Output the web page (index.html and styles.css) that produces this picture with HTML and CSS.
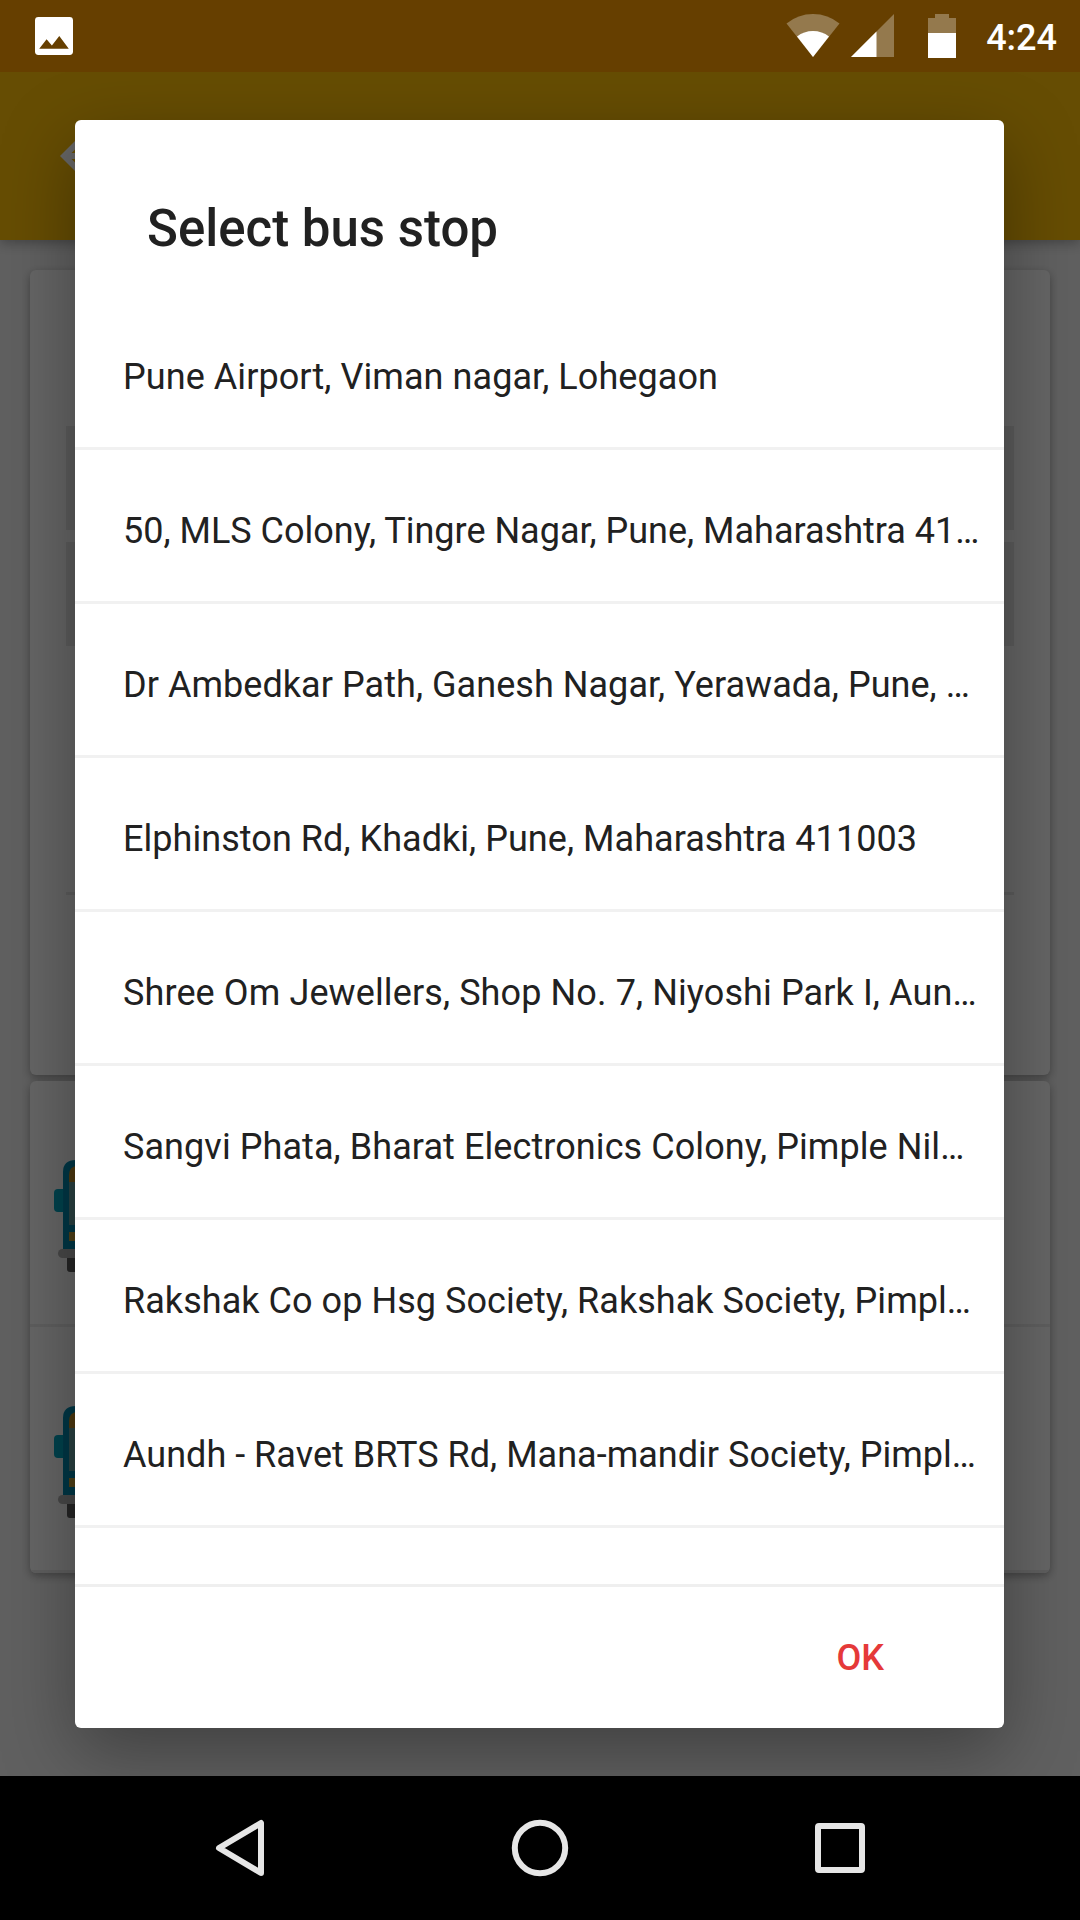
FILE: index.html
```html
<!DOCTYPE html>
<html lang="en">
<head>
<meta charset="utf-8">
<title>Select bus stop</title>
<link rel="stylesheet" href="styles.css">
</head>
<body>
<svg width="0" height="0" class="defs" aria-hidden="true">
  <symbol id="bus" viewBox="0 0 114 112">
    <rect x="13" y="92" width="20" height="20" rx="3" fill="#5c5c5c"/>
    <rect x="81" y="92" width="20" height="20" rx="3" fill="#5c5c5c"/>
    <rect x="0" y="29" width="16" height="23" rx="4" fill="#00a6c0"/>
    <rect x="98" y="29" width="16" height="23" rx="4" fill="#00a6c0"/>
    <path d="M9 90V12Q9 0 22 0H92Q105 0 105 12V90Z" fill="#008bb0"/>
    <path d="M15 22V15Q15 6 24 6H90Q99 6 99 15V22Z" fill="#c29028"/>
    <rect x="15" y="22" width="84" height="43" fill="#69a3a6"/>
    <rect x="15" y="72" width="16" height="9" fill="#c8a03a"/>
    <rect x="83" y="72" width="16" height="9" fill="#c8a03a"/>
    <rect x="4" y="89" width="106" height="9" rx="4.5" fill="#b4b4b4"/>
  </symbol>
</svg>
<div class="screen">
  <header class="status-bar">
    <svg class="photo" viewBox="3 3 18 18"><path fill="#fff" fill-rule="evenodd" d="M21 19.4V4.6Q21 3 19.4 3H4.6Q3 3 3 4.6V19.4Q3 21 4.6 21H19.4Q21 21 21 19.4zM8.5 13.5l2.5 3.01L14.5 12l4.5 6H5z"/></svg>
    <svg class="wifi" viewBox="0 0 54 43"><path d="M0.5 9.5Q12 0 27 0T53.5 9.5L27 43Z" fill="#fff" fill-opacity=".3"/><path d="M11 22.5Q18 17 27 17T43 22.5L27 43Z" fill="#fff"/></svg>
    <svg class="signal" viewBox="0 0 43 43"><path d="M43 0V43H0Z" fill="#fff" fill-opacity=".3"/><path d="M25.5 17.5V43H0Z" fill="#fff"/></svg>
    <svg class="battery" viewBox="0 0 28 44"><path d="M0 19V4H7V0H21V4H28V19Z" fill="#fff" fill-opacity=".3"/><path d="M0 19H28V44H0Z" fill="#fff"/></svg>
    <span class="clock">4:24</span>
  </header>
  <div class="app-bar">
    <svg class="back" viewBox="0 0 24 24"><path fill="#fff" d="M20 11H7.83l5.59-5.59L12 4l-8 8 8 8 1.41-1.41L7.83 13H20z"/></svg>
  </div>
  <main class="content">
    <section class="card form">
      <div class="field"></div>
      <div class="field"></div>
      <div class="rule"></div>
    </section>
    <section class="card buses">
      <div class="bus-row"><svg class="bus"><use href="#bus"/></svg></div>
      <div class="bus-row"><svg class="bus"><use href="#bus"/></svg></div>
    </section>
  </main>
  <div class="scrim">
    <section class="dialog">
      <h1 class="title">Select bus stop</h1>
      <ul class="stops">
        <li>Pune Airport, Viman nagar, Lohegaon</li>
        <li>50, MLS Colony, Tingre Nagar, Pune, Maharashtra 41…</li>
        <li>Dr Ambedkar Path, Ganesh Nagar, Yerawada, Pune, …</li>
        <li>Elphinston Rd, Khadki, Pune, Maharashtra 411003</li>
        <li>Shree Om Jewellers, Shop No. 7, Niyoshi Park I, Aun…</li>
        <li>Sangvi Phata, Bharat Electronics Colony, Pimple Nil…</li>
        <li>Rakshak Co op Hsg Society, Rakshak Society, Pimpl…</li>
        <li>Aundh - Ravet BRTS Rd, Mana-mandir Society, Pimpl…</li>
      </ul>
      <footer class="actions"><button class="ok">OK</button></footer>
    </section>
  </div>
  <nav class="nav-bar">
    <svg class="nav-icon" viewBox="0 0 60 60"><path d="M51 5V55L9 30Z"/></svg>
    <svg class="nav-icon" viewBox="0 0 60 60"><circle cx="30" cy="30" r="25.2"/></svg>
    <svg class="nav-icon" viewBox="0 0 60 60"><rect x="8" y="8" width="44" height="44" rx="1"/></svg>
  </nav>
</div>
</body>
</html>
```
FILE: styles.css
```css
* { box-sizing: border-box; }
body { margin: 0; font-family: Roboto, "Noto Sans", sans-serif; }
.defs { position: absolute; }

.screen {
  position: relative;
  display: flex;
  flex-direction: column;
  width: 1080px;
  height: 1920px;
  overflow: hidden;
  background: #f0f0f0;
}

.status-bar {
  position: relative;
  z-index: 3;
  display: flex;
  align-items: flex-start;
  height: 72px;
  padding: 14px 23px 0 35px;
  background: #663f00;
}
.photo { width: 38px; height: 38px; margin: 3px auto 0 0; }
.wifi { width: 54px; height: 43px; margin-right: 11px; }
.signal { width: 43px; height: 43px; margin-right: 34px; }
.battery { width: 28px; height: 44px; margin-right: 30px; }
.clock { color: #fff; font-size: 36px; font-weight: 500; line-height: 48px; }

.app-bar {
  position: relative;
  height: 168px;
  padding: 48px;
  background: #ffc008;
  box-shadow: 0 3px 12px rgba(0, 0, 0, .3);
}
.back { display: block; width: 72px; height: 72px; }

.content {
  flex: 1;
  display: flex;
  flex-direction: column;
  gap: 6px;
  padding: 30px 30px 0;
}
.card {
  background: #fcfcfc;
  border-radius: 6px;
  box-shadow: 0 3px 9px rgba(0, 0, 0, .32);
}
.form {
  display: flex;
  flex-direction: column;
  gap: 12px;
  height: 805px;
  padding: 156px 36px 0;
}
.field { height: 104px; background: #e6e6e6; }
.rule { height: 3px; margin-top: 234px; background: #e6e6e6; }
.buses { height: 492px; overflow: hidden; }
.bus-row {
  height: 246px;
  padding: 79px 24px 0;
  border-bottom: 3px solid #ececec;
}
.bus { display: block; width: 114px; height: 112px; }

.scrim {
  position: absolute;
  inset: 72px 0 144px;
  z-index: 2;
  padding: 48px 76px 48px 75px;
  overflow: hidden;
  background: rgba(0, 0, 0, .6);
}
.dialog {
  display: flex;
  flex-direction: column;
  height: 1608px;
  background: #fff;
  border-radius: 6px;
  box-shadow: 0 24px 72px rgba(0, 0, 0, .34);
  color: #212121;
}
.title {
  height: 176px;
  margin: 0;
  padding: 79px 72px 0;
  font-size: 51px;
  font-weight: 500;
  line-height: 60px;
}
.stops {
  flex: 1;
  margin: 0;
  padding: 0;
  list-style: none;
}
.stops li {
  height: 154px;
  padding: 60px 0 0 48px;
  border-bottom: 3px solid #f1f1f1;
  font-size: 36px;
  line-height: 42px;
  letter-spacing: .05px;
  white-space: nowrap;
}
.stops li:nth-child(1) { letter-spacing: .07px; }
.stops li:nth-child(2) { letter-spacing: 0; }
.stops li:nth-child(5) { letter-spacing: .11px; }
.stops li:nth-child(6) { letter-spacing: .08px; }
.stops li:nth-child(8) { letter-spacing: .02px; }
.actions {
  display: flex;
  justify-content: flex-end;
  align-items: center;
  height: 144px;
  padding-right: 120px;
  border-top: 3px solid #efefef;
}
.ok {
  padding: 0;
  border: 0;
  background: none;
  color: #e53939;
  font: 500 36px/42px Roboto, sans-serif;
}

.nav-bar {
  z-index: 3;
  display: flex;
  justify-content: space-between;
  align-items: center;
  height: 144px;
  padding: 0 210px;
  background: #000;
}
.nav-icon {
  width: 60px;
  height: 60px;
  fill: none;
  stroke: #e6e6e6;
  stroke-width: 6;
  stroke-linejoin: round;
}
```
